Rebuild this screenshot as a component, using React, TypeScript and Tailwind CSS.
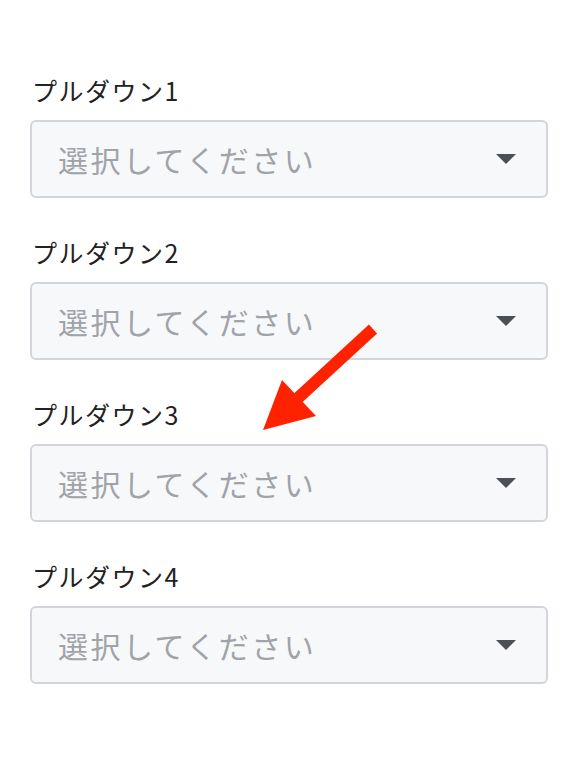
import React from "react";

const items = ["プルダウン1", "プルダウン2", "プルダウン3", "プルダウン4"];

export default function App() {
  return (
    <div
      className="relative w-[564px] h-[764px] bg-white pt-[72px] pl-[30px] pr-[16px]"
      style={{ fontFamily: '"Noto Sans CJK JP", "Noto Sans", sans-serif' }}
    >
      <div className="flex flex-col gap-[36px]">
        {items.map((label) => (
          <div key={label} className="flex flex-col gap-[12px]">
            <div className="h-[36px] flex items-center pl-[2px] text-[25px] leading-[36px] text-[#222222] tracking-[1.5px]">
              {label}
            </div>
            <div className="h-[78px] flex items-center justify-between rounded-[6px] border-[2px] border-[#d2d5d9] bg-[#f7f8fa] pl-[26px] pr-[30px]">
              <span className="text-[30px] text-[#a0a3a7] tracking-[2.5px]">選択してください</span>
              <svg width="20" height="10" viewBox="0 0 20 10">
                <polygon points="0,0 20,0 10,10" fill="#4b5056" />
              </svg>
            </div>
          </div>
        ))}
      </div>
      <svg
        className="absolute left-0 top-0 pointer-events-none"
        width="564"
        height="764"
        viewBox="0 0 564 764"
      >
        <line x1="373" y1="329" x2="298" y2="398" stroke="#ff2200" strokeWidth="12" />
        <polygon points="263,430 282,380 316,416" fill="#ff2200" />
      </svg>
    </div>
  );
}
